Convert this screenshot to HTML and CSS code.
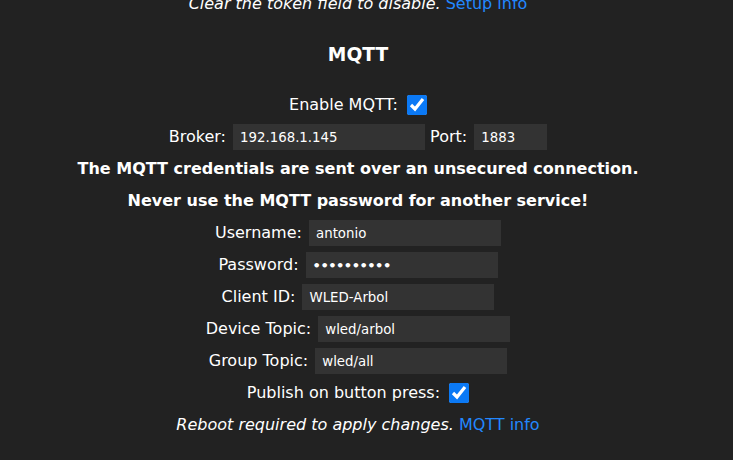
FILE: index.html
```html
<!DOCTYPE html>
<html>
<head>
<meta charset="utf-8">
<link rel="stylesheet" href="styles.css">
</head>
<body>
<div class="page">
  <div class="row"><i>Clear the token field to disable. </i><a href="#" class="link">Setup info</a></div>
  <h3 class="title">MQTT</h3>
  <div class="row">Enable MQTT: <input type="checkbox" class="cb" checked></div>
  <div class="row">Broker: <input type="text" class="field" value="192.168.1.145"> Port: <input type="text" class="field port" value="1883"></div>
  <div class="row"><b>The MQTT credentials are sent over an unsecured connection.</b></div>
  <div class="row"><b>Never use the MQTT password for another service!</b></div>
  <div class="row">Username: <input type="text" class="field" value="antonio"></div>
  <div class="row">Password: <input type="password" class="field pass" value="antonio123"></div>
  <div class="row">Client ID: <input type="text" class="field" value="WLED-Arbol"></div>
  <div class="row">Device Topic: <input type="text" class="field" value="wled/arbol"></div>
  <div class="row">Group Topic: <input type="text" class="field" value="wled/all"></div>
  <div class="row">Publish on button press: <input type="checkbox" class="cb" checked></div>
  <div class="row"><i>Reboot required to apply changes. </i><a href="#" class="link">MQTT info</a></div>
</div>
</body>
</html>
```
FILE: styles.css
```css
html, body {
  margin: 0;
  padding: 0;
  background: #222;
  overflow: hidden;
}
body {
  font-family: "DejaVu Sans", Verdana, sans-serif;
  font-size: 16px;
  color: #fff;
  text-align: center;
  line-height: 32px;
}
.page {
  width: 716px;
  margin-top: -12px;
}
.row {
  height: 32px;
  white-space: nowrap;
}
.title {
  font-size: 18.7px;
  line-height: 32px;
  margin: 18.7px 0 18.2px;
  font-weight: bold;
}
.link {
  color: #28f;
  text-decoration: none;
}
.field {
  box-sizing: border-box;
  width: 192px;
  height: 26px;
  margin-left: 2px;
  background: #333;
  color: #fff;
  border: 0;
  padding: 0 7px;
  font-family: "DejaVu Sans", Verdana, sans-serif;
  font-size: 13.33px;
  vertical-align: middle;
  outline: none;
}
.pass {
  font-weight: bold;
  font-size: 13px;
  letter-spacing: -0.5px;
}
.port {
  width: 73px;
}
.cb {
  width: 20px;
  height: 20px;
  margin: 0 0 0 4px;
  vertical-align: middle;
  accent-color: #0b79f5;
}
```
